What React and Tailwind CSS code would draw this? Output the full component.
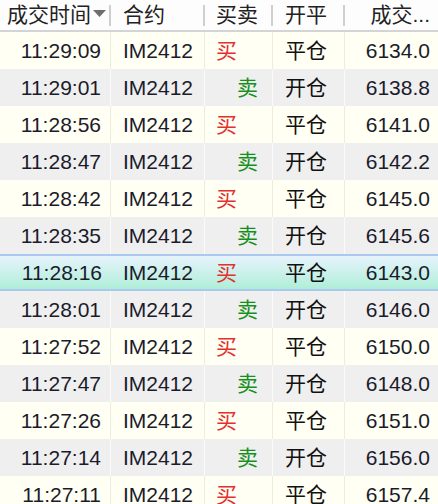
import React from 'react';

const trades = [
  ['11:29:09', 'IM2412', '买', '平仓', '6134.0'],
  ['11:29:01', 'IM2412', '卖', '开仓', '6138.8'],
  ['11:28:56', 'IM2412', '买', '平仓', '6141.0'],
  ['11:28:47', 'IM2412', '卖', '开仓', '6142.2'],
  ['11:28:42', 'IM2412', '买', '平仓', '6145.0'],
  ['11:28:35', 'IM2412', '卖', '开仓', '6145.6'],
  ['11:28:16', 'IM2412', '买', '平仓', '6143.0'],
  ['11:28:01', 'IM2412', '卖', '开仓', '6146.0'],
  ['11:27:52', 'IM2412', '买', '平仓', '6150.0'],
  ['11:27:47', 'IM2412', '卖', '开仓', '6148.0'],
  ['11:27:26', 'IM2412', '买', '平仓', '6151.0'],
  ['11:27:14', 'IM2412', '卖', '开仓', '6156.0'],
  ['11:27:11', 'IM2412', '买', '平仓', '6157.4'],
];

const SELECTED = 6;

const HeaderCell = ({ className, children, last }) => (
  <div className={`relative flex h-full items-center ${className}`}>
    {children}
    {!last && (
      <div className="absolute right-0 top-[5px] h-[21px] w-[2px] bg-[#cfcfcf]" />
    )}
  </div>
);

const TradeRow = ({ trade, index }) => {
  const [time, code, side, action, price] = trade;
  const selected = index === SELECTED;
  const even = index % 2 === 1;
  const rowBg = selected
    ? 'bg-gradient-to-b from-[#e6f3fc] to-[#aeeed8] border-y-2 border-[#abc8ee]'
    : even
      ? 'bg-[#efefef]'
      : 'bg-[#fffff3]';
  const line = selected
    ? ''
    : even
      ? 'border-r border-[#fafafa]'
      : 'border-r border-[#ececdf]';

  return (
    <div className={`flex h-[37px] items-center ${rowBg}`}>
      <div className={`flex h-full w-[111px] items-center justify-end pr-[9px] ${line}`}>
        {time}
      </div>
      <div className={`flex h-full w-[94px] items-center pl-[12px] ${line}`}>
        {code}
      </div>
      <div
        className={`flex h-full w-[68px] items-center ${line} ${
          side === '买'
            ? 'justify-start pl-[11px] text-[#e2312f]'
            : 'justify-end pr-[14px] text-[#17901b]'
        }`}
      >
        {side}
      </div>
      <div className={`flex h-full w-[72px] items-center pl-[12px] text-[#111] ${line}`}>
        {action}
      </div>
      <div className="flex h-full flex-1 items-center justify-end pr-[8px]">
        {price}
      </div>
    </div>
  );
};

const App = () => {
  return (
    <div
      className="relative h-[504px] w-[438px] overflow-hidden bg-[#fffff3] text-[21px] text-[#1b1b2c]"
      style={{ fontFamily: '"Liberation Sans", "Noto Sans CJK SC", sans-serif' }}
    >
      <div className="flex h-[32px] items-center border-b-2 border-[#d4d4d4] bg-[#fdfdfd] text-[#222]">
        <HeaderCell className="w-[111px] pl-[7px]">
          <span>成交时间</span>
          <svg width="13" height="10" viewBox="0 0 13 10" className="ml-[2px] mb-[3px]">
            <path d="M0 1 L13 1 L6.5 8 Z" fill="#6e6e6e" />
          </svg>
        </HeaderCell>
        <HeaderCell className="w-[94px] pl-[12px]">合约</HeaderCell>
        <HeaderCell className="w-[68px] pl-[11px]">买卖</HeaderCell>
        <HeaderCell className="w-[72px] pl-[12px]">开平</HeaderCell>
        <HeaderCell className="flex-1 justify-end pr-[8px]" last>
          成交...
        </HeaderCell>
      </div>
      <div className="flex flex-col">
        {trades.map((trade, i) => (
          <TradeRow key={trade[0]} trade={trade} index={i} />
        ))}
      </div>
    </div>
  );
};

export default App;
